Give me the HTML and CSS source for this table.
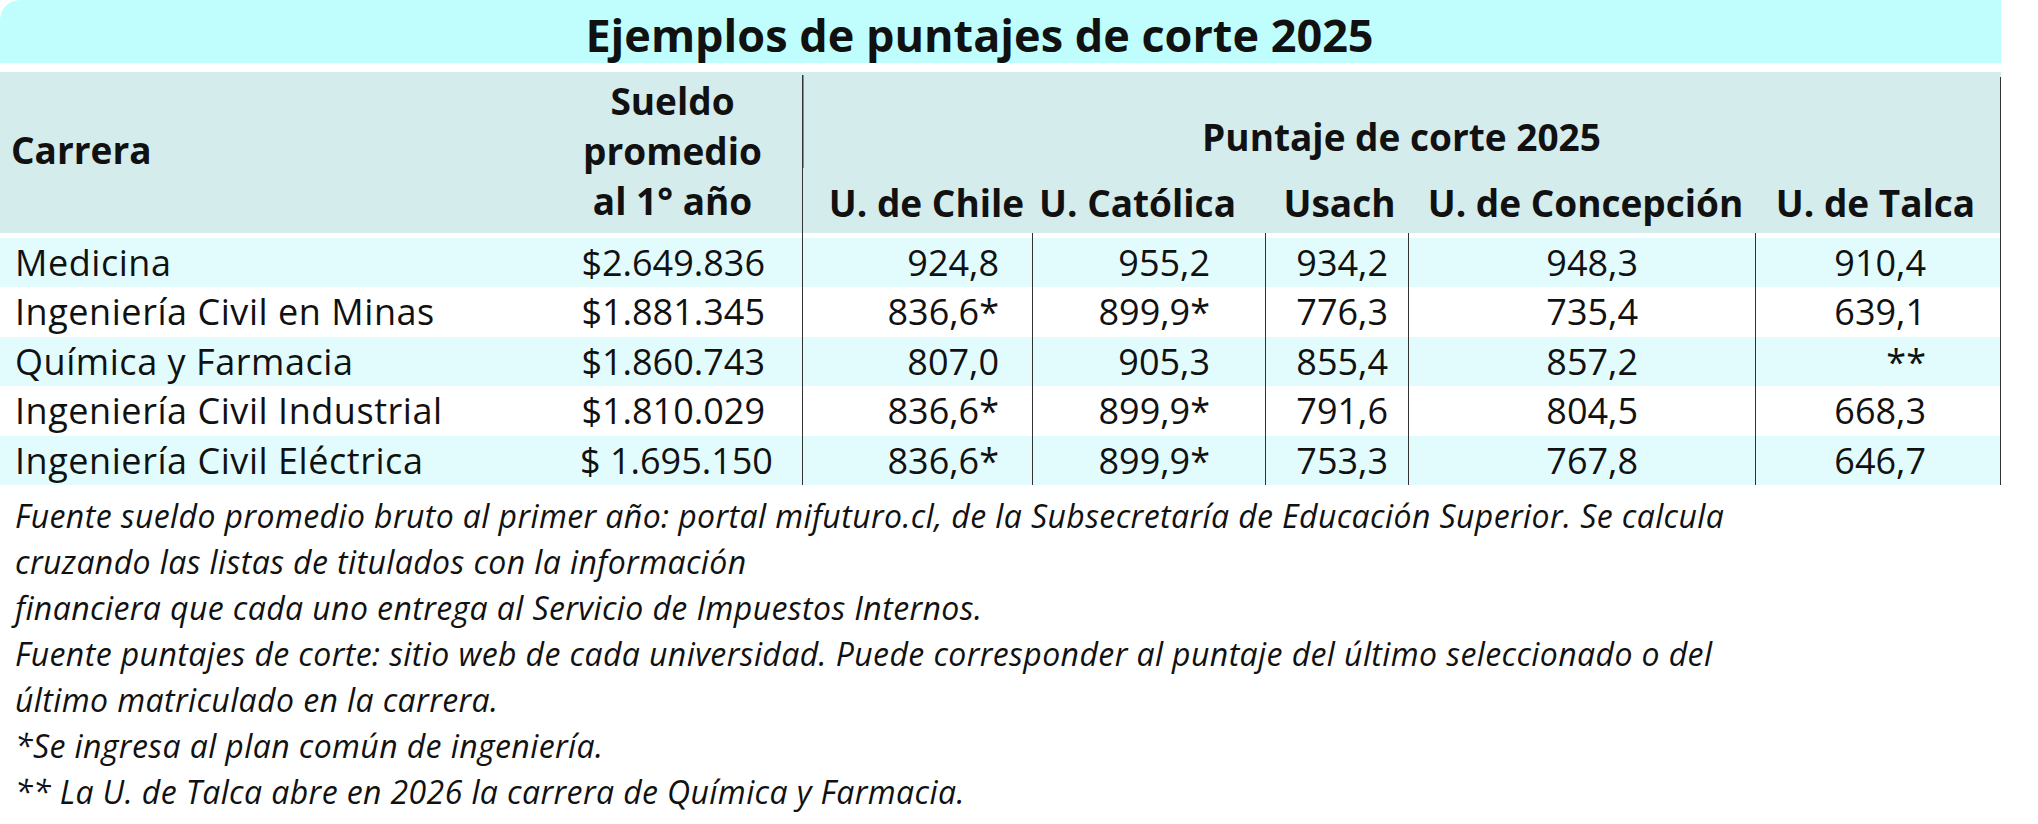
FILE: index.html
```html
<!DOCTYPE html>
<html lang="es">
<head>
<meta charset="utf-8">
<title>Ejemplos de puntajes de corte 2025</title>
<link rel="stylesheet" href="styles.css">
</head>
<body>
<div class="sheet">
  <div class="title">Ejemplos de puntajes de corte 2025</div>
  <div class="head">
    <div class="h-carrera">Carrera</div>
    <div class="h-sueldo">Sueldo<br>promedio<br>al 1° año</div>
    <div class="h-group">Puntaje de corte 2025</div>
    <div class="h-sub c-chile">U. de Chile</div>
    <div class="h-sub c-cat">U. Católica</div>
    <div class="h-sub c-usach">Usach</div>
    <div class="h-sub c-conc">U. de Concepción</div>
    <div class="h-sub c-talca">U. de Talca</div>
  </div>
  <div class="rows">
    <div class="row odd first">
      <div class="c-name">Medicina</div>
      <div class="c-sueldo">$2.649.836</div>
      <div class="c-chile">924,8</div>
      <div class="c-cat">955,2</div>
      <div class="c-usach">934,2</div>
      <div class="c-conc">948,3</div>
      <div class="c-talca">910,4</div>
    </div>
    <div class="row">
      <div class="c-name">Ingeniería Civil en Minas</div>
      <div class="c-sueldo">$1.881.345</div>
      <div class="c-chile">836,6*</div>
      <div class="c-cat">899,9*</div>
      <div class="c-usach">776,3</div>
      <div class="c-conc">735,4</div>
      <div class="c-talca">639,1</div>
    </div>
    <div class="row odd">
      <div class="c-name">Química y Farmacia</div>
      <div class="c-sueldo">$1.860.743</div>
      <div class="c-chile">807,0</div>
      <div class="c-cat">905,3</div>
      <div class="c-usach">855,4</div>
      <div class="c-conc">857,2</div>
      <div class="c-talca">**</div>
    </div>
    <div class="row">
      <div class="c-name">Ingeniería Civil Industrial</div>
      <div class="c-sueldo">$1.810.029</div>
      <div class="c-chile">836,6*</div>
      <div class="c-cat">899,9*</div>
      <div class="c-usach">791,6</div>
      <div class="c-conc">804,5</div>
      <div class="c-talca">668,3</div>
    </div>
    <div class="row odd">
      <div class="c-name">Ingeniería Civil Eléctrica</div>
      <div class="c-sueldo">$ 1.695.150</div>
      <div class="c-chile">836,6*</div>
      <div class="c-cat">899,9*</div>
      <div class="c-usach">753,3</div>
      <div class="c-conc">767,8</div>
      <div class="c-talca">646,7</div>
    </div>
  </div>
  <div class="notes">
    <p>Fuente sueldo promedio bruto al primer año: portal mifuturo.cl, de la Subsecretaría de Educación Superior. Se calcula<br>cruzando las listas de titulados con la información<br>financiera que cada uno entrega al Servicio de Impuestos Internos.</p>
    <p>Fuente puntajes de corte: sitio web de cada universidad. Puede corresponder al puntaje del último seleccionado o del<br>último matriculado en la carrera.</p>
    <p>*Se ingresa al plan común de ingeniería.</p>
    <p>** La U. de Talca abre en 2026 la carrera de Química y Farmacia.</p>
  </div>
</div>
</body>
</html>
```

FILE: styles.css
```css
* { box-sizing: border-box; }

html, body {
  margin: 0;
  padding: 0;
  background: #ffffff;
}

body {
  color: #111111;
  font-family: "Open Sans", "Noto Sans", "Liberation Sans", sans-serif;
}

.sheet {
  width: 2001px;
}

.title {
  height: 63px;
  padding: 3px 42px 0 0;
  background: #c0fefe;
  border-top-left-radius: 20px;
  font-weight: 700;
  font-size: 45px;
  line-height: 63px;
  text-align: center;
  white-space: nowrap;
}

.head {
  margin-top: 9px;
  display: grid;
  grid-template-columns: 580px 222px 230px 233px 143px 347px 246px;
  grid-template-rows: 96px 65px;
  background: #d5eced;
  font-weight: 700;
  font-size: 37px;
  line-height: 50px;
  white-space: nowrap;
}

.h-carrera {
  grid-column: 1;
  grid-row: 1 / 3;
  display: flex;
  align-items: center;
  padding-left: 11px;
  padding-bottom: 6px;
}

.h-sueldo {
  grid-column: 2;
  grid-row: 1 / 3;
  display: flex;
  align-items: center;
  justify-content: center;
  text-align: center;
  padding-right: 37px;
  padding-bottom: 3px;
}

.h-group {
  grid-column: 3 / 8;
  grid-row: 1;
  background:
    linear-gradient(#333, #333) 0 3px / 1.5px 100% no-repeat,
    linear-gradient(#333, #333) 100% 5px / 1.5px 100% no-repeat;
  display: flex;
  align-items: flex-end;
  justify-content: center;
  padding-bottom: 6px;
}

.h-sub {
  grid-row: 2;
  padding-top: 10px;
  text-align: center;
}

.head .c-chile { grid-column: 3; border-left: 1.5px solid #333; padding-left: 18px; }
.head .c-cat   { grid-column: 4; padding-right: 22px; }
.head .c-usach { grid-column: 5; padding-left: 6px; }
.head .c-conc  { grid-column: 6; padding-left: 8px; }
.head .c-talca { grid-column: 7; border-right: 1.5px solid #333; padding-right: 4px; }

.rows {
  font-size: 36px;
  line-height: 49.4px;
  white-space: nowrap;
}

.row {
  display: grid;
  grid-template-columns: 580px 222px 230px 233px 143px 347px 246px;
  height: 49.4px;
  background: #ffffff;
}

.row.odd {
  background: #e2fcfd;
}

.row.first {
  height: 54.4px;
  background: linear-gradient(#ffffff 0 5px, #e2fcfd 5px);
}

.row.first > div {
  padding-top: 5px;
}

.row > div {
  text-align: right;
}

.row .c-name   { text-align: left; padding-left: 15px; letter-spacing: 0.55px; }
.row .c-sueldo { padding-right: 37px; }
.row .c-chile  { padding-right: 33px; border-left: 1.5px solid #333; }
.row .c-cat    { padding-right: 55px; border-left: 1.5px solid #333; }
.row .c-usach  { padding-right: 20px; border-left: 1.5px solid #333; }
.row .c-conc   { padding-right: 117px; border-left: 1.5px solid #333; }
.row .c-talca  { padding-right: 74px; border-left: 1.5px solid #333; border-right: 1.5px solid #333; }

.notes {
  margin-top: 8px;
  padding-left: 15px;
  font-style: italic;
  font-size: 32px;
  line-height: 46px;
  letter-spacing: 0.4px;
  white-space: nowrap;
}

.notes p {
  margin: 0;
}
```
